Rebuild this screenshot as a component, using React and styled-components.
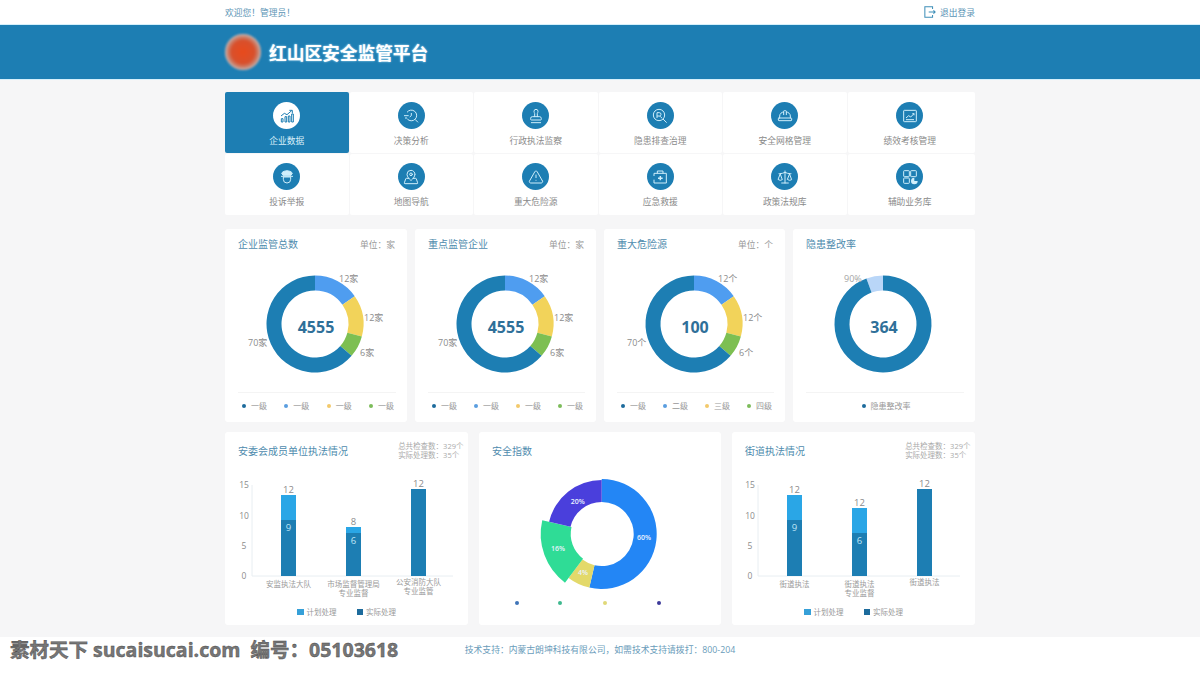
import React from "react";
import styled, { createGlobalStyle } from "styled-components";
import { Stamp, HardHat, MapPinned, TriangleAlert, Scale } from "lucide-react";

const font = `"Open Sans", "Noto Sans CJK SC", sans-serif`;
const blue = "#1d7eb3";

const GlobalStyle = createGlobalStyle`
  html, body { margin: 0; padding: 0; background: #f6f6f7; }
  body { font-family: ${font}; width: 1200px; height: 674px; overflow: hidden; }
`;

// icons that lucide doesn't have
const Glyph = ({ size, strokeWidth, children }) => (
  <svg viewBox="0 0 24 24" width={size} height={size} fill="none" stroke="currentColor" strokeWidth={strokeWidth}>
    {children}
  </svg>
);
const GrowthIcon = (p) => (
  <Glyph {...p}>
    <path d="M3.5 21v-5h2.5v5zM9 21v-8h2.5v8zM14 21v-9h2.5v9zM19 21V9h2.5v12z" />
    <path d="M3 12l5-4 4 2 7-6M15.5 3.5H20V8" />
  </Glyph>
);
const ClockSearchIcon = (p) => (
  <Glyph {...p}>
    <path d="M6 6.5a8 8 0 1 1 .5 10" />
    <path d="M12.5 7.5v4l-2.5 2M18 17l4.5 4.5M1.5 11.5h7M3 15h3" />
  </Glyph>
);
const HazardSearchIcon = (p) => (
  <Glyph {...p}>
    <circle cx="10.5" cy="10.5" r="8.5" />
    <path d="M16.5 16.5l5.5 5.5M7.5 15V7h3.5a2.5 2.5 0 0 1 0 5H7.5M15 15c-1.5-.5-2.5-2-3.5-3" />
  </Glyph>
);
const ChartBoardIcon = (p) => (
  <Glyph {...p}>
    <rect x="2.5" y="3.5" width="19" height="17" rx="1" />
    <path d="M6 15l4-3.5 3 2 5-5M15.5 8.5H18V11M6 17.5h12" />
  </Glyph>
);
const OfficerIcon = (p) => (
  <Glyph {...p}>
    <path d="M4 6c4-4.5 12-4.5 16 0l-2 3.5H6z" fill="currentColor" />
    <path d="M6.5 12h11v3.5a5.5 5.5 0 0 1-11 0z" />
    <path d="M3 11h18" />
  </Glyph>
);
const AidKitIcon = (p) => (
  <Glyph {...p}>
    <path d="M8 6.5V3h8.5v3.5M3 10.5V6.5h18.5V21H3v-5" />
    <path d="M12.5 10.5v6.5M9 13.8h7" strokeWidth="2.2" />
  </Glyph>
);
const ModulesIcon = (p) => (
  <Glyph {...p}>
    <rect x="2.5" y="2.5" width="8.5" height="9" rx="1" />
    <rect x="13" y="2.5" width="8.5" height="9" rx="1" />
    <rect x="2.5" y="13.5" width="8.5" height="8" rx="1" />
    <path d="M18.5 13a5 5 0 1 0 5 5h-5z" fill="currentColor" stroke="none" />
  </Glyph>
);

const menus = [
  { name: "企业数据", Icon: GrowthIcon, active: true },
  { name: "决策分析", Icon: ClockSearchIcon },
  { name: "行政执法监察", Icon: Stamp },
  { name: "隐患排查治理", Icon: HazardSearchIcon },
  { name: "安全网格管理", Icon: HardHat },
  { name: "绩效考核管理", Icon: ChartBoardIcon },
  { name: "投诉举报", Icon: OfficerIcon },
  { name: "地图导航", Icon: MapPinned },
  { name: "重大危险源", Icon: TriangleAlert },
  { name: "应急救援", Icon: AidKitIcon },
  { name: "政策法规库", Icon: Scale },
  { name: "辅助业务库", Icon: ModulesIcon },
];

const levels = ["#1d6b9c", "#5a9ee0", "#f3c96b", "#7cbc5a"];

const polar = (cx, cy, r, deg) => {
  const a = ((deg - 90) * Math.PI) / 180;
  return [cx + r * Math.cos(a), cy + r * Math.sin(a)];
};

// annular sector from angle a to angle b, clockwise from 12 o'clock
const sector = (cx, cy, outer, inner, a, b) => {
  const big = b - a > 180 ? 1 : 0;
  const [x1, y1] = polar(cx, cy, outer, a);
  const [x2, y2] = polar(cx, cy, outer, b);
  const [x3, y3] = polar(cx, cy, inner, b);
  const [x4, y4] = polar(cx, cy, inner, a);
  return `M${x1} ${y1}A${outer} ${outer} 0 ${big} 1 ${x2} ${y2}L${x3} ${y3}A${inner} ${inner} 0 ${big} 0 ${x4} ${y4}Z`;
};

function Donut({ total, parts, labels }) {
  return (
    <ChartSvg width="180" height="109" viewBox="0 0 180 109">
      {parts.map((p) => (
        <path key={p.from} d={sector(90, 48, 48.5, 33.5, p.from, p.to)} fill={p.color} />
      ))}
      <CenterValue x="91" y="57.3">{total}</CenterValue>
      {labels.map((l) => (
        <ChartLabel key={l.text + l.x} x={l.x} y={l.y} $color={l.color}>{l.text}</ChartLabel>
      ))}
    </ChartSvg>
  );
}

const ringParts = [
  { from: 0, to: 55, color: "#4f9df0" },
  { from: 55, to: 105, color: "#f2d35a" },
  { from: 105, to: 131, color: "#7dbf52" },
  { from: 131, to: 360, color: blue },
];

const ringLabels = (unit) => [
  { text: `12${unit}`, x: 114, y: 6 },
  { text: `12${unit}`, x: 139, y: 44.5 },
  { text: `6${unit}`, x: 135, y: 79.5 },
  { text: `70${unit}`, x: 23, y: 70 },
];

const YAXIS = [0, 5, 10, 15];
const Y0 = 97;
const yAt = (v) => Y0 - v * 6.05;

function BarChart({ axisX, axisEnd, bars }) {
  return (
    <ChartSvg width="243" height="126" viewBox="0 0 243 126">
      <line x1={axisX} x2={axisX} y1="6" y2={Y0} stroke="#e8eef2" />
      <line x1={axisX} x2={axisEnd} y1={Y0} y2={Y0} stroke="#e8eef2" />
      {YAXIS.map((v) => (
        <AxisLabel key={v} x={axisX - 8} y={yAt(v) + 3}>{v}</AxisLabel>
      ))}
      {bars.map((b) => (
        <g key={b.x}>
          {b.topY !== b.midY && <rect x={b.x} y={b.topY} width="15" height={b.midY - b.topY} fill="#2aa6e6" />}
          <rect x={b.x} y={b.midY} width="15" height={Y0 - b.midY} fill={blue} />
          <BarValue x={b.x + 7.5} y={b.topY - 2} textAnchor="middle">{b.total}</BarValue>
          {b.inner && <BarInner x={b.x + 7.5} y={b.midY + 11} textAnchor="middle">{b.inner}</BarInner>}
          {b.names.map((n, i) => (
            <AxisName key={n} x={b.x + 7.5} y={b.nameY + i * 9} textAnchor="middle">{n}</AxisName>
          ))}
        </g>
      ))}
    </ChartSvg>
  );
}

// bars are given in page pixels, the chart svg starts at y 479
const CHART_TOP = 479;
const bar = (x, top, mid, total, inner, names, nameY) => ({
  x, topY: top - CHART_TOP, midY: mid - CHART_TOP, total, inner, names, nameY: nameY - CHART_TOP,
});

function RingCard({ title, unit, total, levelNames }) {
  return (
    <Card>
      <CardHead>
        <CardTitle>{title}</CardTitle>
        <Unit>单位：{unit}</Unit>
      </CardHead>
      <Donut total={total} parts={ringParts} labels={ringLabels(unit)} />
      <Legend>
        {levelNames.map((n, i) => (
          <LegendItem key={i}><Dot $color={levels[i]} />{n}</LegendItem>
        ))}
      </Legend>
    </Card>
  );
}

function BarCard({ title, axisX, axisEnd, bars }) {
  return (
    <Card>
      <CardHead>
        <CardTitle $tall>{title}</CardTitle>
        <Summary>总共检查数：329个<br />实际处理数：35个</Summary>
      </CardHead>
      <BarChart axisX={axisX} axisEnd={axisEnd} bars={bars} />
      <BarLegend>
        <BarLegendItem><Square $color="#36a0d8" />计划处理</BarLegendItem>
        <BarLegendItem><Square $color="#1d6b9c" />实际处理</BarLegendItem>
      </BarLegend>
    </Card>
  );
}

export default function App() {
  return (
    <>
      <GlobalStyle />
      <TopBar>
        <TopInner>
          <span>欢迎您！管理员！</span>
          <Logout>
            <svg viewBox="0 0 14 14" width="12" height="12" fill="none" stroke="#3f8fb8" strokeWidth="1.2">
              <path d="M10 3.5V1H1v12h9v-2.5M5.5 7H13M11 5l2 2-2 2" />
            </svg>
            退出登录
          </Logout>
        </TopInner>
      </TopBar>
      <Banner>
        <BannerInner>
          <Emblem />
          <Brand>红山区安全监管平台</Brand>
        </BannerInner>
      </Banner>
      <Main>
        <MenuGrid>
          {menus.map(({ name, Icon, active }) => (
            <MenuItem key={name} $active={active}>
              <MenuIcon $active={active}><Icon size={16} strokeWidth={1.5} /></MenuIcon>
              <MenuName>{name}</MenuName>
            </MenuItem>
          ))}
        </MenuGrid>
        <RingRow>
          <RingCard title="企业监管总数" unit="家" total="4555" levelNames={["一级", "一级", "一级", "一级"]} />
          <RingCard title="重点监管企业" unit="家" total="4555" levelNames={["一级", "一级", "一级", "一级"]} />
          <RingCard title="重大危险源" unit="个" total="100" levelNames={["一级", "二级", "三级", "四级"]} />
          <Card>
            <CardHead><CardTitle>隐患整改率</CardTitle></CardHead>
            <Donut
              total="364"
              parts={[
                { from: -20, to: 0, color: "#b9d6f8" },
                { from: 0, to: 340, color: blue },
              ]}
              labels={[{ text: "90%", x: 51, y: 6, color: "#a5a5a5" }]}
            />
            <Legend $center>
              <LegendItem><Dot $color={levels[0]} />隐患整改率</LegendItem>
            </Legend>
          </Card>
        </RingRow>
        <BarRow>
          <BarCard
            title="安委会成员单位执法情况"
            axisX={27}
            axisEnd={228}
            bars={[
              bar(56, 495, 520, 12, 9, ["安监执法大队"], 586.5),
              bar(121, 527, 533, 8, 6, ["市场监督管理局", "专业监督"], 586.5),
              bar(186, 489, 489, 12, null, ["公安消防大队", "专业监管"], 585),
            ]}
          />
          <Card>
            <CardHead><CardTitle $tall>安全指数</CardTitle></CardHead>
            <ChartSvg width="242" height="121" viewBox="0 0 242 121">
              <path d={sector(122.7, 55, 55, 32, 0, 193)} fill="#2386f5" />
              <path d={sector(122.7, 55, 55, 32, 193, 217)} fill="#e3d96a" />
              <path d={sector(122.7, 55, 61, 31, 217, 283)} fill="#2fdc96" />
              <path d={sector(122.7, 55, 54, 32, 283, 360)} fill="#4a3fdc" />
              <PieLabel x="165" y="61">60%</PieLabel>
              <PieLabel x="98.7" y="25">20%</PieLabel>
              <PieLabel x="79" y="72">16%</PieLabel>
              <PieLabel x="104" y="96">4%</PieLabel>
            </ChartSvg>
            <PieLegend>
              <Dot $color="#3f74b8" />
              <Dot $color="#3fb98f" />
              <Dot $color="#e0d878" />
              <Dot $color="#3d3a9a" />
            </PieLegend>
          </Card>
          <BarCard
            title="街道执法情况"
            axisX={26}
            axisEnd={228}
            bars={[
              bar(55, 495, 520, 12, 9, ["街道执法"], 586.5),
              bar(120, 508, 533, 12, 6, ["街道执法", "专业监督"], 586.5),
              bar(185, 489, 489, 12, null, ["街道执法"], 585),
            ]}
          />
        </BarRow>
      </Main>
      <Footer>
        <span>技术支持：内蒙古朗坤科技有限公司，如需技术支持请拨打：800-204</span>
        <Watermark>素材天下 sucaisucai.com&nbsp;&nbsp;编号：05103618</Watermark>
      </Footer>
    </>
  );
}

const TopBar = styled.div`
  height: 24px;
  background: #fff;
`;

const TopInner = styled.div`
  width: 750px;
  height: 100%;
  margin: 0 auto;
  display: flex;
  align-items: center;
  justify-content: space-between;
  font-size: 8.75px;
  color: #5a94b5;
`;

const Logout = styled.span`
  display: flex;
  align-items: center;
  gap: 4px;
`;

const Banner = styled.div`
  height: 56px;
  background: ${blue};
  border-top: 1px solid #d5f0fb;
  border-bottom: 1px solid #d5f0fb;
  box-sizing: border-box;
`;

const BannerInner = styled.div`
  width: 750px;
  height: 100%;
  margin: 0 auto;
  display: flex;
  align-items: center;
  gap: 8px;
`;

const Emblem = styled.div`
  width: 36px;
  height: 36px;
  border-radius: 50%;
  background: radial-gradient(circle, #e84a1c 0, #d8502c 45%, #c98a78 62%, #d2dadf 76%, #8fbcd6 100%);
  filter: blur(1px);
`;

const Brand = styled.h1`
  margin: 0;
  font-size: 17.7px;
  font-weight: 700;
  color: #fff;
  text-shadow: 0 0 2px #bfe6f8;
`;

const Main = styled.main`
  width: 750px;
  margin: 12px auto 0;
`;

const MenuGrid = styled.div`
  display: grid;
  grid-template-columns: repeat(5, 123.5px) 1fr;
  grid-auto-rows: 61px;
  gap: 1px;
  height: 123px;
`;

const MenuItem = styled.div`
  display: flex;
  flex-direction: column;
  align-items: center;
  padding-top: 10px;
  box-sizing: border-box;
  gap: 5.5px;
  background: ${(p) => (p.$active ? blue : "#fff")};
  border-radius: 2px;
  color: ${(p) => (p.$active ? "#d9eef9" : "#8a8a8a")};
  &:nth-child(6n) {
    padding-right: 3px;
  }
  &:nth-child(n + 7) {
    padding-top: 9px;
    gap: 5.5px;
  }
`;

const MenuIcon = styled.div`
  width: 27px;
  height: 27px;
  border-radius: 50%;
  display: flex;
  align-items: center;
  justify-content: center;
  background: ${(p) => (p.$active ? "#fff" : blue)};
  color: ${(p) => (p.$active ? blue : "#cfeefb")};
`;

const MenuName = styled.span`
  font-size: 8.75px;
  line-height: 13px;
`;

const RingRow = styled.div`
  display: grid;
  grid-template-columns: 182px 181px 181px 182px;
  gap: 8px;
  margin-top: 14px;
  height: 193px;
`;

const BarRow = styled.div`
  display: grid;
  grid-template-columns: 243px 242px 243px;
  gap: 11px;
  margin-top: 10px;
  height: 193px;
`;

const Card = styled.section`
  background: #fff;
  border-radius: 3px;
  display: flex;
  flex-direction: column;
  position: relative;
`;

const CardHead = styled.div`
  height: 47px;
  flex: none;
  padding: 7px 12px 0 13px;
  box-sizing: border-box;
  display: flex;
  justify-content: space-between;
  align-items: flex-start;
`;

const CardTitle = styled.h3`
  margin: 0;
  font-size: 10px;
  line-height: ${(p) => (p.$tall ? "24px" : "16px")};
  font-weight: 400;
  color: #4f8cae;
  white-space: nowrap;
`;

const Unit = styled.span`
  font-size: 8.75px;
  line-height: 18px;
  color: #999;
`;

const Summary = styled.div`
  position: absolute;
  top: 10px;
  right: 4.5px;
  font-size: 7.5px;
  line-height: 9.3px;
  color: #aaa;
`;

const ChartSvg = styled.svg`
  display: block;
  flex: none;
  overflow: visible;
  font-family: ${font};
`;

const CenterValue = styled.text`
  font-size: 16px;
  font-weight: 700;
  fill: #2f7099;
  text-anchor: middle;
`;

const ChartLabel = styled.text`
  font-size: 9px;
  fill: ${(p) => p.$color || "#8c8c8c"};
`;

const AxisLabel = styled.text`
  font-size: 8.5px;
  fill: #8c8c8c;
  text-anchor: middle;
`;

const AxisName = styled.text`
  font-size: 7.5px;
  fill: #9a9a9a;
`;

const BarValue = styled.text`
  font-size: 9.5px;
  fill: #8c8c8c;
`;

const BarInner = styled.text`
  font-size: 9.5px;
  fill: #bfe6f8;
`;

const PieLabel = styled.text`
  font-size: 7px;
  font-weight: 600;
  fill: #e9f2ff;
  text-anchor: middle;
`;

const Legend = styled.div`
  margin: 7px 11px 0 13px;
  padding: 7px 2px 0 4px;
  border-top: 1px solid #f4f4f4;
  display: flex;
  justify-content: ${(p) => (p.$center ? "center" : "space-between")};
`;

const LegendItem = styled.span`
  display: flex;
  align-items: center;
  gap: 5px;
  font-size: 8px;
  line-height: 12px;
  color: #999;
`;

const BarLegendItem = styled(LegendItem)`
  gap: 3px;
  font-size: 7.5px;
`;

const Dot = styled.i`
  width: 4px;
  height: 4px;
  border-radius: 50%;
  background: ${(p) => p.$color};
`;

const Square = styled.i`
  width: 6.5px;
  height: 6.5px;
  background: ${(p) => p.$color};
`;

const BarLegend = styled.div`
  display: flex;
  justify-content: center;
  gap: 20px;
  margin-top: 1px;
`;

const PieLegend = styled.div`
  display: grid;
  grid-template-columns: 43.4px 44.3px 54.7px 4px;
  align-items: center;
  height: 5px;
  padding-left: 36px;
`;

const Footer = styled.footer`
  position: absolute;
  left: 0;
  right: 0;
  top: 637px;
  height: 37px;
  background: #fff;
  display: flex;
  justify-content: center;
  align-items: flex-start;
  padding-top: 7px;
  box-sizing: border-box;
  font-size: 8.8px;
  line-height: 12px;
  color: #6a9cba;
`;

const Watermark = styled.div`
  position: absolute;
  left: 10px;
  top: 2px;
  font-size: 19.5px;
  line-height: 22px;
  font-weight: 700;
  color: #777;
  -webkit-text-stroke: 0.4px #444;
  white-space: nowrap;
`;
